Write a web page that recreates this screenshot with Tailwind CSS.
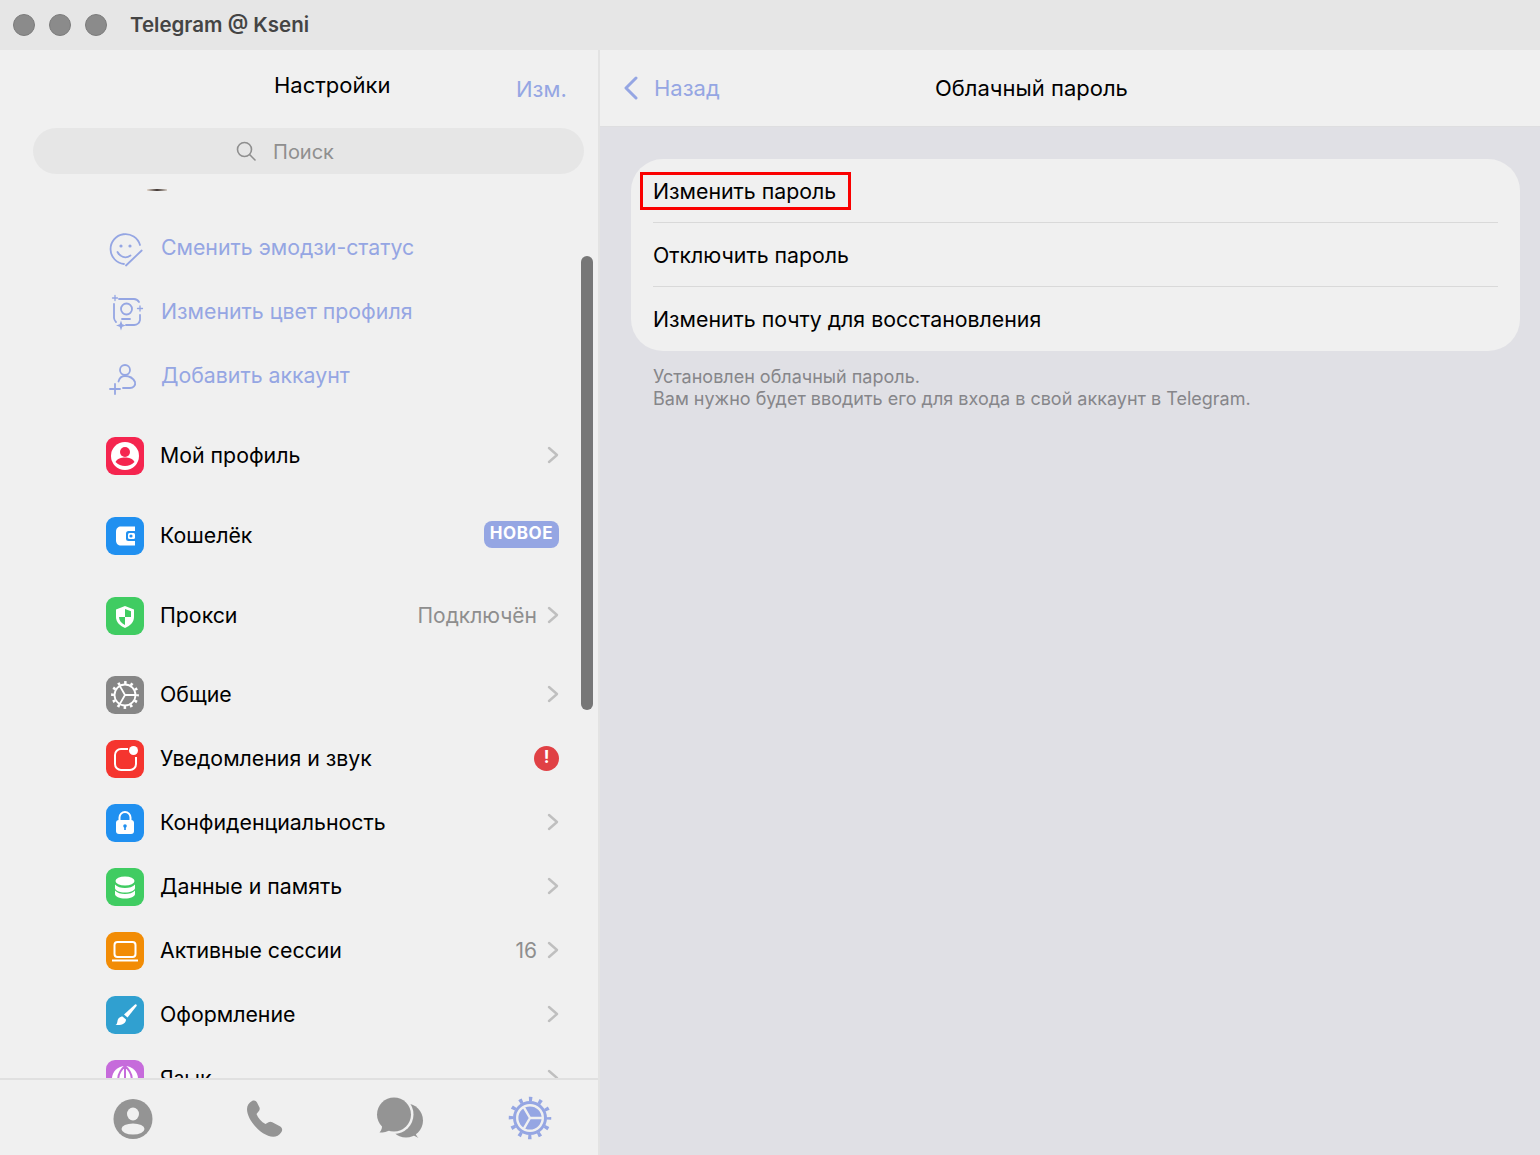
<!DOCTYPE html>
<html lang="ru">
<head>
<meta charset="utf-8">
<title>Telegram</title>
<script src="https://cdn.jsdelivr.net/npm/@tailwindcss/browser@4"></script>
</head>
<body class="[font-family:Inter,sans-serif]">
<div class="w-[1540px] h-[1155px] overflow-hidden flex flex-col bg-[#f0f0f0] text-black">
  <!-- Title bar -->
  <div class="h-[50px] shrink-0 bg-[#e6e6e6] flex items-center pl-[13px] gap-[14px]">
    <span class="w-[22px] h-[22px] rounded-full bg-[#8b8b8b] border border-[#7c7c7c]"></span>
    <span class="w-[22px] h-[22px] rounded-full bg-[#8b8b8b] border border-[#7c7c7c]"></span>
    <span class="w-[22px] h-[22px] rounded-full bg-[#8b8b8b] border border-[#7c7c7c]"></span>
    <span class="ml-[9px] text-[20.500px] font-semibold text-[#444444]">Telegram @ Kseni</span>
  </div>
  <div class="flex flex-1 min-h-0">
    <!-- Left pane -->
    <div class="relative w-[600px] shrink-0 flex flex-col border-r-2 border-[#e3e3e3]">
      <div class="relative h-[78px] shrink-0">
        <span class="absolute left-[274px] top-[22px] text-[22px] leading-[26px]">Настройки</span>
        <span class="absolute left-[516px] top-[26px] text-[22px] leading-[26px] text-[#95a6e3]">Изм.</span>
      </div>
      <div class="mx-[33px] w-[551px] h-[46px] shrink-0 rounded-[23px] bg-[#e6e6e6] flex items-center justify-center gap-[16px] pr-[48px] text-[20px] text-[#8f8f8f]">
        <svg width="22" height="22" viewBox="0 0 22 22" fill="none" stroke="#8f8f8f" stroke-width="1.6" stroke-linecap="round"><circle cx="9.5" cy="9.5" r="7"/><path d="M14.8 14.8L20 20"/></svg>
        <span class="pt-[2px]">Поиск</span>
      </div>
      <!-- List -->
      <div class="relative flex-1 min-h-0 overflow-hidden pt-[42px]">
        <div class="absolute left-[147px] top-[15px] w-[20px] h-[2px] bg-gradient-to-r from-[#e8dcd0] via-[#443a36] to-[#d8d0c8]"></div>

        <div class="h-[64px] pl-[107px] flex items-center gap-[15px] text-[21.300px] text-[#95a6e3]">
          <svg class="w-[39px] h-[39px] shrink-0" viewBox="0 0 39 39" fill="none" stroke="#95a6e3" stroke-width="1.8" stroke-linecap="round">
            <path d="M33 16A15 15 0 1 0 17 35"/><circle cx="14" cy="17" r="1.600" fill="#95a6e3" stroke="none"/><circle cx="23" cy="17" r="1.600" fill="#95a6e3" stroke="none"/><path d="M10.500 23c2.500 5 8 7 13 3.500"/><path d="M19 36.500L34.700 21.500"/>
          </svg>
          <span>Сменить эмодзи-статус</span>
        </div>
        <div class="h-[64px] pl-[107px] flex items-center gap-[15px] text-[21.300px] text-[#95a6e3]">
          <svg class="w-[39px] h-[39px] shrink-0" viewBox="0 0 39 39" fill="none" stroke="#95a6e3" stroke-width="1.8" stroke-linecap="round">
            <path d="M12 6h15a6 6 0 0 1 5 3"/><path d="M7 11v14a7 7 0 0 0 2 4"/><path d="M33 22v5a6 6 0 0 1-6 5H19"/><circle cx="19.500" cy="16" r="5.500"/><path d="M15 26h8"/>
            <path d="M8 2.500v5M5.500 5h5M33 13v5M30.500 15.500h5" stroke-width="1.3"/>
            <path d="M14 27.500l1.300 3.700 3.700 1.300-3.700 1.300-1.300 3.700-1.300-3.700-3.700-1.300 3.700-1.300z" fill="#95a6e3" stroke="none"/>
          </svg>
          <span>Изменить цвет профиля</span>
        </div>
        <div class="h-[64px] pl-[107px] flex items-center gap-[15px] text-[21.300px] text-[#95a6e3]">
          <svg class="w-[39px] h-[39px] shrink-0" viewBox="0 0 39 39" fill="none" stroke="#95a6e3" stroke-width="1.8" stroke-linecap="round">
            <circle cx="18" cy="13" r="5"/><path d="M11.500 24.500C12.500 20.500 15 19 18 19C22 19 26 21 28 25C29 28.500 26 31 23 31H16"/><path d="M8 27v10M3 32h10"/>
          </svg>
          <span>Добавить аккаунт</span>
        </div>

        <div class="h-[8px]"></div>

        <div class="h-[80px] pl-[106px] pr-[39px] flex items-center text-[21.300px]">
          <svg class="w-[38px] h-[38px] shrink-0" viewBox="0 0 38 38"><rect width="38" height="38" rx="9" fill="#f5254f"/><circle cx="19" cy="19" r="14" fill="#fff"/><circle cx="19" cy="15" r="5" fill="#f5254f"/><path d="M9.500 25c2-3.500 5.500-4.500 9.500-4.500s7.500 1 9.500 4.500c-2.500 2.700-6 4-9.500 4s-7-1.300-9.500-4z" fill="#f5254f"/></svg>
          <span class="ml-[16px] flex-1">Мой профиль</span>
          <svg class="w-[12px] h-[18px] mb-[2px]" viewBox="0 0 12 18" fill="none" stroke="#bfbfbf" stroke-width="2.400" stroke-linecap="round" stroke-linejoin="round"><path d="M2 2l8 7-8 7"/></svg>
        </div>
        <div class="h-[80px] pl-[106px] pr-[39px] flex items-center text-[21.300px]">
          <svg class="w-[38px] h-[38px] shrink-0" viewBox="0 0 38 38"><rect width="38" height="38" rx="9" fill="#2090f0"/><path d="M10 14.500c0-3 2-5 5-5h14v19H15c-3 0-5-2-5-5z" fill="#fff"/><rect x="20" y="14" width="11" height="10" rx="2.500" fill="#2090f0"/><rect x="22" y="16" width="7" height="6" rx="1.500" fill="#fff"/><circle cx="25" cy="19" r="1.600" fill="#2090f0"/></svg>
          <span class="ml-[16px] flex-1">Кошелёк</span>
          <span class="w-[75px] h-[27px] mb-[4px] rounded-[8px] bg-[#95a6e3] text-white text-[17px] font-bold tracking-[0.6px] flex items-center justify-center">НОВОЕ</span>
        </div>
        <div class="h-[80px] pl-[106px] pr-[39px] flex items-center text-[21.300px]">
          <svg class="w-[38px] h-[38px] shrink-0" viewBox="0 0 38 38"><rect width="38" height="38" rx="9" fill="#40cc62"/><path d="M19 9l9 3.500v7.500c0 5-3.500 8.500-9 11-5.500-2.500-9-6-9-11v-7.500z" fill="#fff"/><path d="M19 12l6 2.300V20h-6zM19 20v8c-3.500-1.800-6-4.500-6-8z" fill="#40cc62"/></svg>
          <span class="ml-[16px] flex-1">Прокси</span>
          <span class="text-[#8e8e8e] mr-[10px] text-[21px]">Подключён</span>
          <svg class="w-[12px] h-[18px] mb-[2px]" viewBox="0 0 12 18" fill="none" stroke="#bfbfbf" stroke-width="2.400" stroke-linecap="round" stroke-linejoin="round"><path d="M2 2l8 7-8 7"/></svg>
        </div>

        <div class="h-[7px]"></div>

        <div class="h-[64px] pl-[106px] pr-[39px] flex items-center text-[21.300px]">
          <svg class="w-[38px] h-[38px] shrink-0" viewBox="0 0 38 38" fill="none" stroke="#fff"><rect width="38" height="38" rx="9" fill="#868686" stroke="none"/><circle cx="19" cy="19" r="10.500" stroke-width="1.800"/><circle cx="19" cy="19" r="12.500" stroke-width="2.800" stroke-dasharray="2.600 3.945" stroke-dashoffset="1.300"/><path d="M19 19h10.500M19 19l-5.250-9.100M19 19l-5.250 9.100" stroke-width="1.800"/></svg>
          <span class="ml-[16px] flex-1">Общие</span>
          <svg class="w-[12px] h-[18px] mb-[2px]" viewBox="0 0 12 18" fill="none" stroke="#bfbfbf" stroke-width="2.400" stroke-linecap="round" stroke-linejoin="round"><path d="M2 2l8 7-8 7"/></svg>
        </div>
        <div class="h-[64px] pl-[106px] pr-[39px] flex items-center text-[21.300px]">
          <svg class="w-[38px] h-[38px] shrink-0" viewBox="0 0 38 38" fill="none"><rect width="38" height="38" rx="9" fill="#f5352f"/><path d="M22 9H15a6 6 0 0 0-6 6v9a6 6 0 0 0 6 6h9a6 6 0 0 0 6-6v-7" stroke="#fff" stroke-width="2"/><circle cx="27.500" cy="10.500" r="4.500" fill="#fff"/></svg>
          <span class="ml-[16px] flex-1">Уведомления и звук</span>
          <span class="w-[25px] h-[25px] mb-[2px] rounded-full bg-[#e04145] text-white text-[17px] font-bold flex items-center justify-center">!</span>
        </div>
        <div class="h-[64px] pl-[106px] pr-[39px] flex items-center text-[21.300px]">
          <svg class="w-[38px] h-[38px] shrink-0" viewBox="0 0 38 38" fill="none"><rect width="38" height="38" rx="9" fill="#2090f0"/><path d="M13.500 17v-3.500a5.500 5.500 0 0 1 11 0V17" stroke="#fff" stroke-width="2"/><rect x="10" y="16" width="18" height="14" rx="3" fill="#fff"/><circle cx="19" cy="22" r="1.800" fill="#2090f0"/><rect x="18.200" y="22" width="1.600" height="4" fill="#2090f0"/></svg>
          <span class="ml-[16px] flex-1">Конфиденциальность</span>
          <svg class="w-[12px] h-[18px] mb-[2px]" viewBox="0 0 12 18" fill="none" stroke="#bfbfbf" stroke-width="2.400" stroke-linecap="round" stroke-linejoin="round"><path d="M2 2l8 7-8 7"/></svg>
        </div>
        <div class="h-[64px] pl-[106px] pr-[39px] flex items-center text-[21.300px]">
          <svg class="w-[38px] h-[38px] shrink-0" viewBox="0 0 38 38"><rect width="38" height="38" rx="9" fill="#40cc62"/><ellipse cx="19" cy="13" rx="9.500" ry="4.500" fill="#fff"/><path d="M9 16.500c2 2.500 6 3.500 10 3.500s8-1 10-3.500V20c0 2.500-4.500 4.500-10 4.500S9 22.500 9 20z" fill="#fff"/><path d="M9 22.500c2 2.500 6 3.500 10 3.500s8-1 10-3.500V26c0 2.500-4.500 4.500-10 4.500S9 28.500 9 26z" fill="#fff"/></svg>
          <span class="ml-[16px] flex-1">Данные и память</span>
          <svg class="w-[12px] h-[18px] mb-[2px]" viewBox="0 0 12 18" fill="none" stroke="#bfbfbf" stroke-width="2.400" stroke-linecap="round" stroke-linejoin="round"><path d="M2 2l8 7-8 7"/></svg>
        </div>
        <div class="h-[64px] pl-[106px] pr-[39px] flex items-center text-[21.300px]">
          <svg class="w-[38px] h-[38px] shrink-0" viewBox="0 0 38 38" fill="none"><rect width="38" height="38" rx="9" fill="#f28c05"/><rect x="8.500" y="10" width="21" height="15" rx="3" stroke="#fff" stroke-width="2"/><path d="M6 28.500h26" stroke="#fff" stroke-width="2"/></svg>
          <span class="ml-[16px] flex-1">Активные сессии</span>
          <span class="text-[#8e8e8e] mr-[10px] text-[21px]">16</span>
          <svg class="w-[12px] h-[18px] mb-[2px]" viewBox="0 0 12 18" fill="none" stroke="#bfbfbf" stroke-width="2.400" stroke-linecap="round" stroke-linejoin="round"><path d="M2 2l8 7-8 7"/></svg>
        </div>
        <div class="h-[64px] pl-[106px] pr-[39px] flex items-center text-[21.300px]">
          <svg class="w-[38px] h-[38px] shrink-0" viewBox="0 0 38 38"><rect width="38" height="38" rx="9" fill="#30a0d0"/><path d="M29 8.500c1-.7 2.300.6 1.600 1.600L21.500 21.500l-3.500-3z" fill="#fff"/><path d="M16.500 20.500l3.500 3c0 3.500-3.500 6-10.500 5.500 2-1 1.500-2.500 2.200-5 .7-2.200 2.800-3.500 4.800-3.500z" fill="#fff"/></svg>
          <span class="ml-[16px] flex-1">Оформление</span>
          <svg class="w-[12px] h-[18px] mb-[2px]" viewBox="0 0 12 18" fill="none" stroke="#bfbfbf" stroke-width="2.400" stroke-linecap="round" stroke-linejoin="round"><path d="M2 2l8 7-8 7"/></svg>
        </div>
        <div class="h-[64px] pl-[106px] pr-[39px] flex items-center text-[21.300px]">
          <svg class="w-[38px] h-[38px] shrink-0" viewBox="0 0 38 38" fill="none"><rect width="38" height="38" rx="9" fill="#c66bdb"/><circle cx="19" cy="19" r="13" fill="#fff"/><path d="M19 6v26M6 19h26M19 6c-9 8-9 18 0 26M19 6c9 8 9 18 0 26" stroke="#c66bdb" stroke-width="2"/></svg>
          <span class="ml-[16px] flex-1">Язык</span>
          <svg class="w-[12px] h-[18px] mb-[2px]" viewBox="0 0 12 18" fill="none" stroke="#bfbfbf" stroke-width="2.400" stroke-linecap="round" stroke-linejoin="round"><path d="M2 2l8 7-8 7"/></svg>
        </div>
      </div>
      <!-- Scrollbar -->
      <div class="absolute left-[581px] top-[206px] w-[12px] h-[454px] rounded-[6px] bg-[#777777]"></div>
      <!-- Tab bar -->
      <div class="relative z-10 h-[77px] shrink-0 bg-[#f0f0f0] border-t-2 border-[#e0e0e0] flex items-center">
        <svg class="absolute left-[113px] top-[18px]" width="40" height="42" viewBox="0 0 40 42"><ellipse cx="20" cy="21" rx="19.500" ry="20" fill="#949494"/><ellipse cx="20" cy="16" rx="6" ry="6.500" fill="#f0f0f0"/><ellipse cx="20" cy="31" rx="11.500" ry="5.500" fill="#f0f0f0"/></svg>
        <svg class="absolute left-[246px] top-[20px]" width="40" height="38" viewBox="0 0 40 38"><path d="M6 1c2-1 4-.5 5 1.500l2.500 5c.5 1.500 0 3-1 4l-2 2.500c1.500 4 5 8 9 10l3-1.800c1.200-.7 2.700-.7 3.800 0l8 4.300c2 1.200 2.500 4 1 5.800-2 3-5 4.500-8 4.500C15 36 1 20 1 9c0-3.500 2-6.500 5-8z" fill="#949494"/></svg>
        <svg class="absolute left-[376px] top-[17px]" width="48" height="44" viewBox="0 0 48 44">
          <circle cx="30" cy="23.500" r="17" fill="#949494"/>
          <path d="M33 36l9.500 5c-2.500-2-3.500-5-3-9z" fill="#949494"/>
          <circle cx="18" cy="17.500" r="19.500" fill="#f0f0f0"/>
          <circle cx="18" cy="17.500" r="17" fill="#949494"/>
          <path d="M6 27c.5 3.500-.5 6.500-2.500 8.500 4 0 8-.5 11-3z" fill="#949494"/>
        </svg>
        <svg class="absolute left-[508px] top-[16px]" width="44" height="44" viewBox="0 0 44 44" fill="none">
          <circle cx="22" cy="22" r="17" fill="#95a6e3"/>
          <circle cx="22" cy="22" r="19" stroke="#95a6e3" stroke-width="4.500" stroke-dasharray="3.400 6.550" stroke-dashoffset="1.700"/>
          <circle cx="22" cy="22" r="12.800" stroke="#f0f0f0" stroke-width="2.400"/>
          <path d="M22 22h12M22 22l-6-10.400M22 22l-6 10.400" stroke="#f0f0f0" stroke-width="2.400"/>
        </svg>
      </div>
    </div>
    <!-- Right pane -->
    <div class="flex-1 flex flex-col bg-[#e0e0e5]">
      <div class="relative h-[77px] shrink-0 bg-[#f0f0f0] border-b border-[#dedee0] flex items-center">
        <svg class="ml-[23px] w-[16px] h-[24px]" viewBox="0 0 16 24" fill="none" stroke="#95a6e3" stroke-width="3" stroke-linecap="round" stroke-linejoin="round"><path d="M13 2L3 12l10 10"/></svg>
        <span class="ml-[15px] text-[22px] text-[#95a6e3]">Назад</span>
        <span class="absolute left-[335px] top-[25px] text-[22px] leading-[26px]">Облачный пароль</span>
      </div>
      <div class="pt-[32px] pl-[31px] pr-[20px]">
        <div class="relative h-[192px] rounded-[32px] bg-[#f0f0f0] pl-[22px] pr-[22px] text-[21.300px]">
          <div class="h-[64px] pt-[2px] flex items-center border-b border-[#d9d9d9]">Изменить пароль</div>
          <div class="h-[64px] pt-[2px] flex items-center border-b border-[#d9d9d9]">Отключить пароль</div>
          <div class="h-[64px] pt-[2px] flex items-center">Изменить почту для восстановления</div>
          <div class="absolute left-[9px] top-[13px] w-[211px] h-[38px] border-[3px] border-[#fa0000]"></div>
        </div>
        <div class="mt-[15px] ml-[22px] text-[18px] leading-[22px] text-[#86868a]">
          <div>Установлен облачный пароль.</div>
          <div>Вам нужно будет вводить его для входа в свой аккаунт в Telegram.</div>
        </div>
      </div>
    </div>
  </div>
</div>
</body>
</html>
